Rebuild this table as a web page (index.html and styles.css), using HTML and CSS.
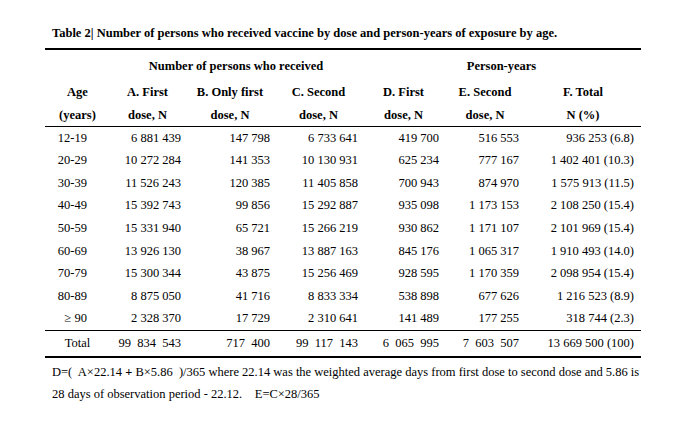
FILE: index.html
```html
<!DOCTYPE html>
<html>
<head>
<meta charset="utf-8">
<link rel="stylesheet" href="styles.css">
</head>
<body>
<div class="page">
  <div class="title">Table 2| Number of persons who received vaccine by dose and person-years of exposure by age.</div>
  <table class="t">
    <colgroup>
      <col class="c0"><col class="c1"><col class="c2"><col class="c3"><col class="c4"><col class="c5"><col class="c6">
    </colgroup>
    <thead>
      <tr class="grp"><th></th><th colspan="3">Number of persons who received</th><th colspan="3">Person-years</th></tr>
      <tr class="h1"><th>Age</th><th>A. First</th><th>B. Only first</th><th>C. Second</th><th>D. First</th><th>E. Second</th><th>F. Total</th></tr>
      <tr class="h2"><th>(years)</th><th>dose, N</th><th>dose, N</th><th>dose, N</th><th>dose, N</th><th>dose, N</th><th>N (%)</th></tr>
    </thead>
    <tbody>
      <tr><td>12-19</td><td>6 881 439</td><td>147 798</td><td>6 733 641</td><td>419 700</td><td>516 553</td><td>936 253 (6.8)</td></tr>
      <tr><td>20-29</td><td>10 272 284</td><td>141 353</td><td>10 130 931</td><td>625 234</td><td>777 167</td><td>1 402 401 (10.3)</td></tr>
      <tr><td>30-39</td><td>11 526 243</td><td>120 385</td><td>11 405 858</td><td>700 943</td><td>874 970</td><td>1 575 913 (11.5)</td></tr>
      <tr><td>40-49</td><td>15 392 743</td><td>99 856</td><td>15 292 887</td><td>935 098</td><td>1 173 153</td><td>2 108 250 (15.4)</td></tr>
      <tr><td>50-59</td><td>15 331 940</td><td>65 721</td><td>15 266 219</td><td>930 862</td><td>1 171 107</td><td>2 101 969 (15.4)</td></tr>
      <tr><td>60-69</td><td>13 926 130</td><td>38 967</td><td>13 887 163</td><td>845 176</td><td>1 065 317</td><td>1 910 493 (14.0)</td></tr>
      <tr><td>70-79</td><td>15 300 344</td><td>43 875</td><td>15 256 469</td><td>928 595</td><td>1 170 359</td><td>2 098 954 (15.4)</td></tr>
      <tr><td>80-89</td><td>8 875 050</td><td>41 716</td><td>8 833 334</td><td>538 898</td><td>677 626</td><td>1 216 523 (8.9)</td></tr>
      <tr><td>≥ 90</td><td>2 328 370</td><td>17 729</td><td>2 310 641</td><td>141 489</td><td>177 255</td><td>318 744 (2.3)</td></tr>
    </tbody>
    <tfoot>
      <tr class="total"><td>Total</td><td>99  834  543</td><td>717  400</td><td>99  117  143</td><td>6  065  995</td><td>7  603  507</td><td>13 669 500 (100)</td></tr>
    </tfoot>
  </table>
  <div class="note">D=(  A×22.14 <b>+</b> B×5.86  )/365 where 22.14 was the weighted average days from first dose to second dose and 5.86 is<br>28 days of observation period - 22.12.    E=C×28/365</div>
</div>
</body>
</html>
```
FILE: styles.css
```css
html, body {
  margin: 0;
  padding: 0;
  background: #fff;
}
body {
  font-family: "Liberation Serif", "Times New Roman", serif;
  color: #000;
  font-size: 12.5px;
}
.page {
  padding: 23px 0 0 45px;
  width: 596px;
}
.title {
  font-weight: bold;
  line-height: 20px;
  padding-left: 7px;
  margin-bottom: 5px;
  white-space: nowrap;
}
.t {
  border-collapse: collapse;
  table-layout: fixed;
  width: 596px;
  border-top: 2px solid #000;
  border-bottom: 2px solid #000;
}
.c0 { width: 65px; }
.c1 { width: 75px; }
.c2 { width: 90px; }
.c3 { width: 87px; }
.c4 { width: 83px; }
.c5 { width: 80px; }
.c6 { width: 116px; }
.t th, .t td {
  padding: 0;
  line-height: 15px;
  white-space: pre;
}
.t th {
  font-weight: bold;
  text-align: center;
}
.grp th { height: 27px; padding-top: 3px; vertical-align: middle; }
.h1 th { height: 25px; }
.h2 th { height: 21px; }
.t thead { border-bottom: 1px solid #000; }
.t tbody tr { height: 22.67px; }
.t td { text-align: right; vertical-align: middle; }
.t td:nth-child(1) { padding-right: 23px; }
.t td:nth-child(2) { padding-right: 4px; }
.t td:nth-child(3) { padding-right: 5px; }
.t td:nth-child(4) { padding-right: 4px; }
.t td:nth-child(5) { padding-right: 6px; }
.t td:nth-child(6) { padding-right: 6px; }
.t td:nth-child(7) { padding-right: 7px; }
.t tfoot { border-top: 1px solid #000; }
.total td { height: 25px; }
.total td:nth-child(1) { text-align: center; padding-right: 0; padding-left: 0; }
.note {
  padding-left: 7px;
  margin-top: 3px;
  line-height: 22px;
  white-space: pre;
}
.note b { font-weight: bold; }
```
